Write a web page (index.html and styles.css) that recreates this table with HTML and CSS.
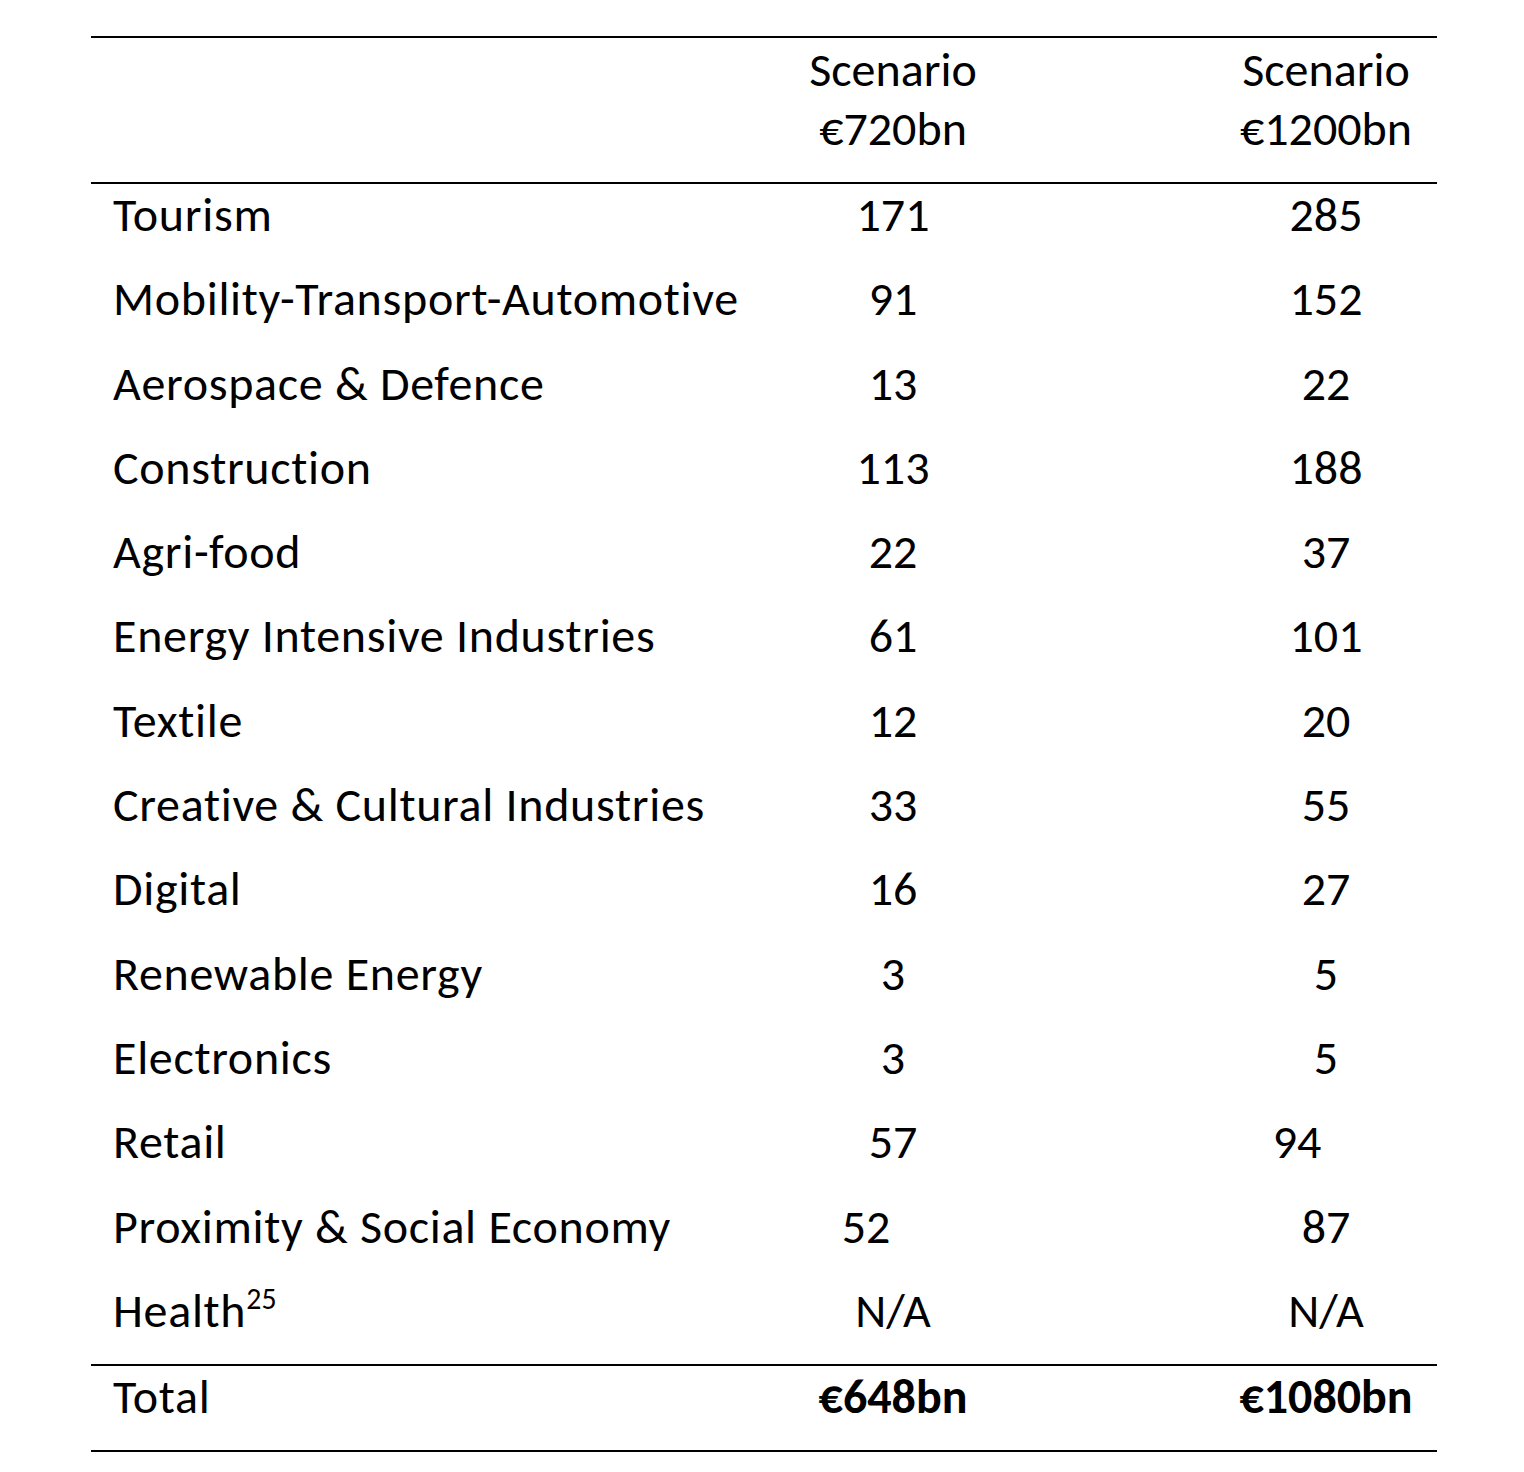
FILE: index.html
```html
<!DOCTYPE html>
<html>
<head>
<meta charset="utf-8">
<link rel="stylesheet" href="styles.css">
</head>
<body>
<div class="table">
  <div class="row head">
    <div class="cell label"></div>
    <div class="cell c2">Scenario<br>€720bn</div>
    <div class="cell c3">Scenario<br>€1200bn</div>
  </div>
  <div class="row"><div class="cell label">Tourism</div><div class="cell c2">171</div><div class="cell c3">285</div></div>
  <div class="row"><div class="cell label">Mobility-Transport-Automotive</div><div class="cell c2">91</div><div class="cell c3">152</div></div>
  <div class="row"><div class="cell label">Aerospace &amp; Defence</div><div class="cell c2">13</div><div class="cell c3">22</div></div>
  <div class="row"><div class="cell label">Construction</div><div class="cell c2">113</div><div class="cell c3">188</div></div>
  <div class="row"><div class="cell label">Agri-food</div><div class="cell c2">22</div><div class="cell c3">37</div></div>
  <div class="row"><div class="cell label">Energy Intensive Industries</div><div class="cell c2">61</div><div class="cell c3">101</div></div>
  <div class="row"><div class="cell label">Textile</div><div class="cell c2">12</div><div class="cell c3">20</div></div>
  <div class="row"><div class="cell label">Creative &amp; Cultural Industries</div><div class="cell c2">33</div><div class="cell c3">55</div></div>
  <div class="row"><div class="cell label">Digital</div><div class="cell c2">16</div><div class="cell c3">27</div></div>
  <div class="row"><div class="cell label">Renewable Energy</div><div class="cell c2">3</div><div class="cell c3">5</div></div>
  <div class="row"><div class="cell label">Electronics</div><div class="cell c2">3</div><div class="cell c3">5</div></div>
  <div class="row"><div class="cell label">Retail</div><div class="cell c2">57</div><div class="cell c3 shift">94</div></div>
  <div class="row"><div class="cell label">Proximity &amp; Social Economy</div><div class="cell c2 shift">52</div><div class="cell c3">87</div></div>
  <div class="row"><div class="cell label">Health<sup>25</sup></div><div class="cell c2">N/A</div><div class="cell c3">N/A</div></div>
  <div class="row total"><div class="cell label">Total</div><div class="cell c2 strong">€648bn</div><div class="cell c3 strong">€1080bn</div></div>
</div>
</body>
</html>
```
FILE: styles.css
```css
html, body {
  margin: 0;
  padding: 0;
  background: #fff;
}
body {
  font-family: Carlito, Calibri, Lato, "Liberation Sans", sans-serif;
  font-size: 48px;
  color: #000;
  font-variant-ligatures: none;
}
.table {
  margin: 36px 0 0 91px;
  width: 1346px;
  border-top: 2px solid #000;
  border-bottom: 2px solid #000;
}
.row {
  display: grid;
  grid-template-columns: 693px 431px 222px;
  height: 84.3px;
  box-sizing: border-box;
  align-items: start;
}
.cell {
  line-height: 58px;
  padding-top: 2px;
  white-space: nowrap;
}
.label {
  padding-left: 22px;
  letter-spacing: 0.7px;
}
.c2 {
  text-align: center;
  padding-right: 213px;
}
.c3 {
  text-align: center;
}
.head {
  height: 146px;
  border-bottom: 2px solid #000;
}
.head .cell {
  line-height: 59px;
  padding-top: 2px;
}
.total {
  height: 86px;
  border-top: 2px solid #000;
}
.strong {
  font-weight: bold;
}
.c3.shift {
  padding-right: 58px;
}
.c2.shift {
  padding-right: 267px;
}
sup {
  font-size: 0.62em;
  line-height: 0;
  vertical-align: 0.6em;
  letter-spacing: 0;
}
```
